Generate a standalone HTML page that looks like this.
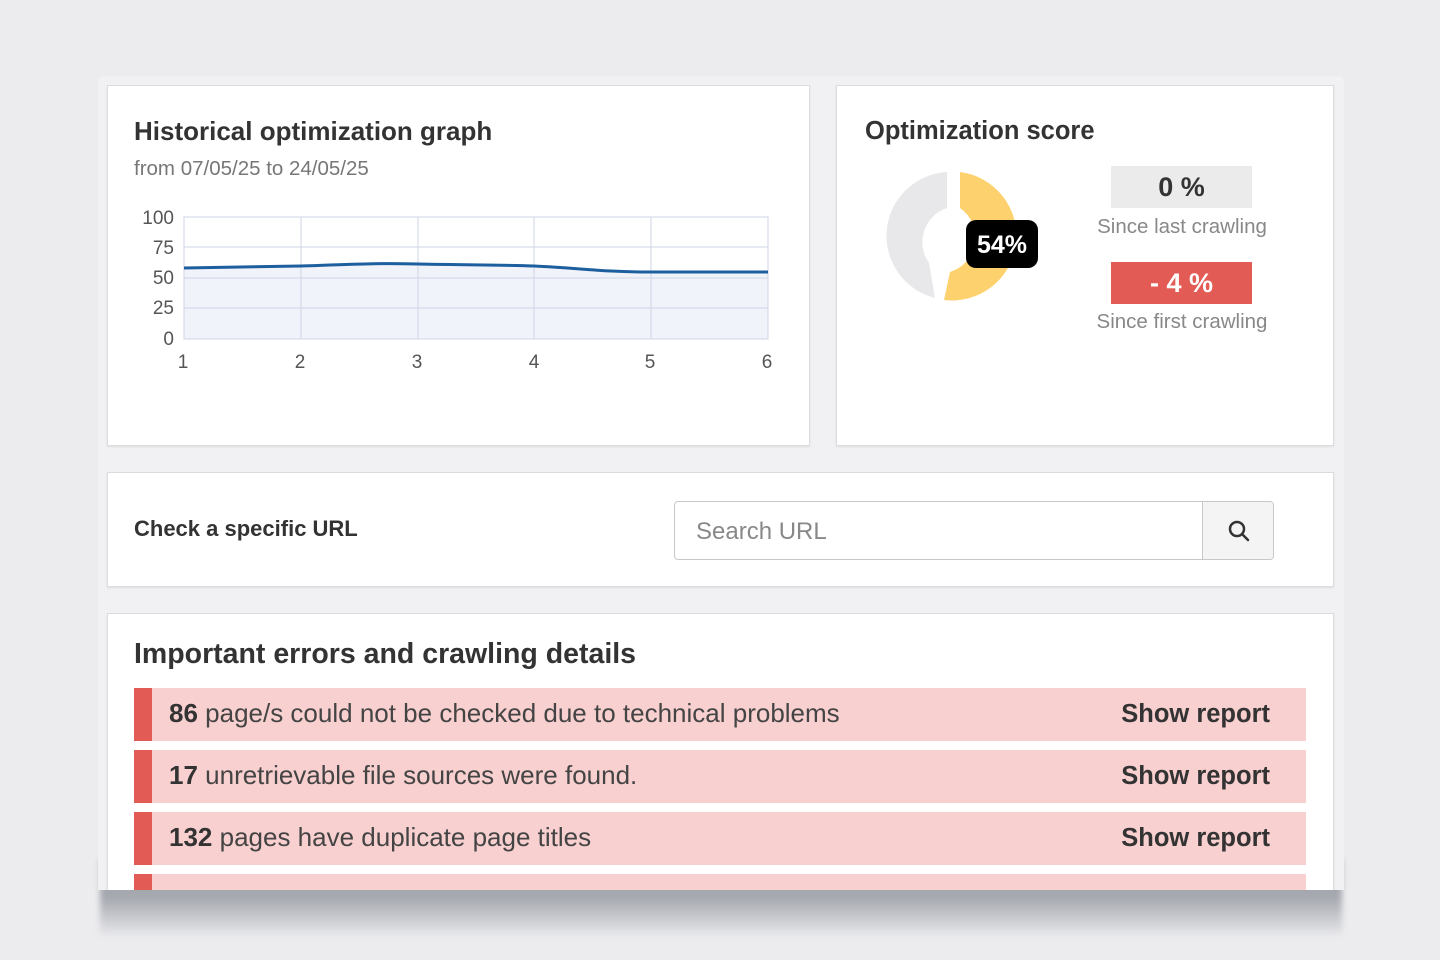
<!DOCTYPE html>
<html><head><style>
*{box-sizing:border-box;margin:0;padding:0}
body{width:1440px;height:960px;background:#ececef;font-family:"Liberation Sans",sans-serif;position:relative;overflow:hidden;color:#333}
.shadow{position:absolute;left:100px;top:860px;width:1242px;height:75px;background:linear-gradient(#9ca0a8,#a6a9b0 50%,#e6e6e9);filter:blur(3px)}
.wrap{position:absolute;left:98px;top:76px;width:1246px;height:814px;background:#f1f1f3;overflow:hidden;border-radius:6px 6px 0 0}
.card{position:absolute;background:#fff;border:1px solid #dcdcdf;box-shadow:0 1px 2px rgba(0,0,0,.08)}
h2{font-size:26px;font-weight:bold;color:#333}
.row{position:absolute;left:26px;width:1172px;height:53px;background:#f9d0d0}
.row:before{content:"";position:absolute;left:0;top:0;width:18px;height:100%;background:#e25c55}
.row span{position:absolute;left:35px;top:10px;font-size:26px;color:#444;white-space:nowrap}
.row b{color:#333}
.row i{position:absolute;right:36px;top:12px;font-size:25.5px;font-style:normal;font-weight:bold;color:#333}
</style></head><body>
<div class="shadow"></div>
<div class="wrap">
 <div class="card" style="left:9px;top:9px;width:703px;height:361px">
  <h2 style="position:absolute;left:26px;top:30px">Historical optimization graph</h2>
  <div style="position:absolute;left:26px;top:71px;font-size:20.5px;color:#777">from 07/05/25 to 24/05/25</div>
  <svg style="position:absolute;left:0;top:0" width="703" height="361">
   <g transform="translate(-108,-86)">
   <polygon points="184,268 301,266 418,264 534,266 651,272 768,272 768,339 184,339" fill="#f1f3fa"/>
   <g stroke="#cfd4e6" stroke-width="1" fill="none">
    <rect x="184" y="217" width="584" height="122"/>
    <line x1="184" y1="247" x2="768" y2="247"/><line x1="184" y1="278" x2="768" y2="278"/><line x1="184" y1="308" x2="768" y2="308"/>
    <line x1="301" y1="217" x2="301" y2="339"/><line x1="418" y1="217" x2="418" y2="339"/><line x1="534" y1="217" x2="534" y2="339"/><line x1="651" y1="217" x2="651" y2="339"/>
   </g>
   <path d="M184,268 L301,266 C360,264 380,263 418,264 C470,265 500,265 534,266 C580,268 600,272 651,272 L768,272" stroke="#1d5f9e" stroke-width="3" fill="none"/>
   <g font-size="19" fill="#555" font-family="Liberation Sans">
    <text x="174" y="224" text-anchor="end">100</text><text x="174" y="254" text-anchor="end">75</text><text x="174" y="284" text-anchor="end">50</text><text x="174" y="314" text-anchor="end">25</text><text x="174" y="345" text-anchor="end">0</text>
    <text x="183" y="368" text-anchor="middle">1</text><text x="300" y="368" text-anchor="middle">2</text><text x="417" y="368" text-anchor="middle">3</text><text x="534" y="368" text-anchor="middle">4</text><text x="650" y="368" text-anchor="middle">5</text><text x="767" y="368" text-anchor="middle">6</text>
   </g></g>
  </svg>
 </div>
 <div class="card" style="left:738px;top:9px;width:498px;height:361px">
  <h2 style="position:absolute;left:28px;top:31px;font-size:25.5px">Optimization score</h2>
  <svg style="position:absolute;left:0;top:0" width="498" height="361">
   <g transform="translate(-837,-86)">
    <path d="M960,172 A64,64 0 0 1 944,300 L950,272 A36,36 0 0 0 960,208 Z" fill="#fdd26e"/>
    <path d="M935,298 A64,64 0 0 1 947,172 L947,208 A36,36 0 0 0 929,263 Z" fill="#e8e8ea"/>
    <rect x="966" y="220" width="72" height="48" rx="10" fill="#000"/>
    <text x="1002" y="253" text-anchor="middle" font-size="25" font-weight="bold" fill="#fff" font-family="Liberation Sans">54%</text>
   </g>
  </svg>
  <div style="position:absolute;left:274px;top:80px;width:141px;height:42px;background:#ebebeb;text-align:center;font-size:27px;font-weight:bold;line-height:42px;color:#333">0 %</div>
  <div style="position:absolute;left:230px;top:129px;width:230px;text-align:center;font-size:20.5px;color:#888">Since last crawling</div>
  <div style="position:absolute;left:274px;top:176px;width:141px;height:42px;background:#e25c55;text-align:center;font-size:27px;font-weight:bold;line-height:42px;color:#fff">- 4 %</div>
  <div style="position:absolute;left:230px;top:224px;width:230px;text-align:center;font-size:20.5px;color:#888">Since first crawling</div>
 </div>
 <div class="card" style="left:9px;top:396px;width:1227px;height:115px">
  <div style="position:absolute;left:26px;top:43px;font-size:22px;font-weight:bold">Check a specific URL</div>
  <div style="position:absolute;left:566px;top:28px;width:600px;height:59px;border:1px solid #c8c8cc;border-radius:4px;background:#fff">
   <div style="position:absolute;left:21px;top:16px;font-size:24px;color:#888">Search URL</div>
   <div style="position:absolute;right:0;top:0;width:71px;height:57px;border-left:1px solid #c8c8cc;background:#f4f4f5;border-radius:0 4px 4px 0">
    <svg width="71" height="57"><circle cx="34" cy="27" r="7" stroke="#333" stroke-width="2.5" fill="none"/><line x1="39" y1="32" x2="45" y2="38" stroke="#333" stroke-width="2.5" stroke-linecap="round"/></svg>
   </div>
  </div>
 </div>
 <div class="card" style="left:9px;top:537px;width:1227px;height:300px">
  <h2 style="position:absolute;left:26px;top:24px;font-size:28.5px">Important errors and crawling details</h2>
  <div class="row" style="top:74px"><span><b>86</b> page/s could not be checked due to technical problems</span><i>Show report</i></div>
  <div class="row" style="top:136px"><span><b>17</b> unretrievable file sources were found.</span><i>Show report</i></div>
  <div class="row" style="top:198px"><span><b>132</b> pages have duplicate page titles</span><i>Show report</i></div>
  <div class="row" style="top:260px"></div>
 </div>
</div>
</body></html>
